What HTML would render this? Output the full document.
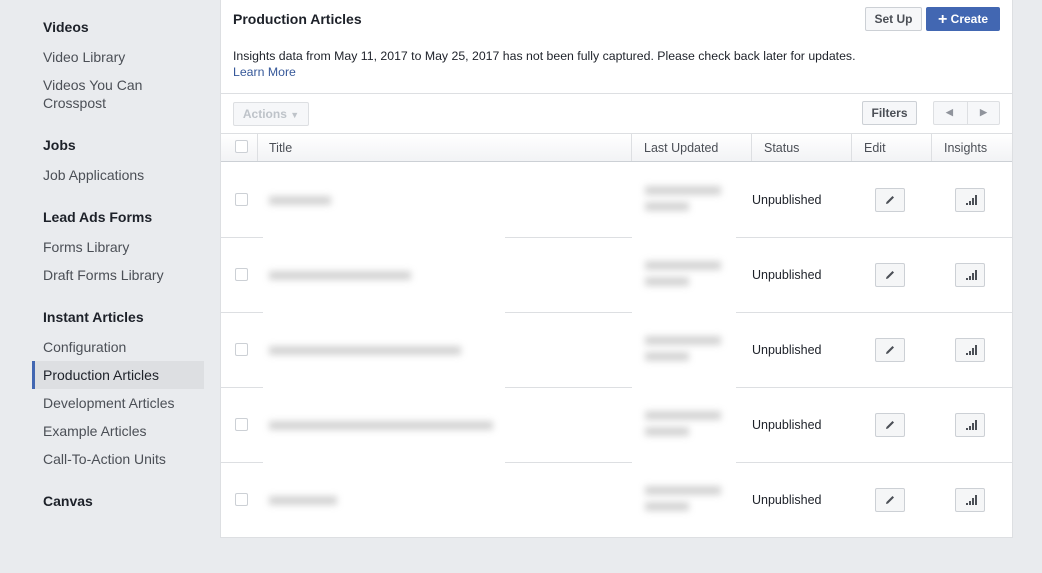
<!DOCTYPE html>
<html><head><style>
*{box-sizing:border-box;margin:0;padding:0}
body{width:1042px;height:573px;background:#e9ebee;font-family:"Liberation Sans",sans-serif;position:relative;overflow:hidden;color:#1d2129}
.a{position:absolute}
.sh{position:absolute;left:43px;font-size:14px;font-weight:bold;color:#1d2129}
.si{position:absolute;left:43px;font-size:14px;color:#4b4f56}
.panel{position:absolute;left:220px;top:-1px;width:793px;height:539px;background:#fff;border:1px solid #dddfe2}
.btn{position:absolute;border:1px solid #ccd0d5;background:#f6f7f9;border-radius:2px;font-size:12px;font-weight:bold;color:#4b4f56;text-align:center}
.hl{position:absolute;left:0;width:791px;height:1px;background:#dddfe2}
.th{position:absolute;top:141px;font-size:12.5px;color:#4b4f56}
.cb{position:absolute;left:14px;width:13px;height:13px;border:1px solid #ccd0d5;border-radius:2px;background:#fff}
.blur{position:absolute;background:#aaa;filter:blur(3.5px);opacity:.5;height:9px}
.st{position:absolute;left:531px;font-size:12.5px;color:#1d2129}
.ib{position:absolute;width:30px;height:24px;border:1px solid #ccd0d5;background:#f5f6f7;border-radius:2px}
.wb{position:absolute;background:#fff;height:4px}
</style></head><body>
<div class="sh" style="top:19px">Videos</div>
<div class="si" style="top:49px">Video Library</div>
<div class="si" style="top:77px">Videos You Can</div>
<div class="si" style="top:95px">Crosspost</div>
<div class="sh" style="top:137px">Jobs</div>
<div class="si" style="top:167px">Job Applications</div>
<div class="sh" style="top:209px">Lead Ads Forms</div>
<div class="si" style="top:239px">Forms Library</div>
<div class="si" style="top:267px">Draft Forms Library</div>
<div class="sh" style="top:309px">Instant Articles</div>
<div class="si" style="top:339px">Configuration</div>
<div class="a" style="left:32px;top:361px;width:172px;height:28px;background:#dddfe2;border-left:3px solid #4267b2"></div>
<div class="si" style="top:367px;color:#1d2129">Production Articles</div>
<div class="si" style="top:395px">Development Articles</div>
<div class="si" style="top:423px">Example Articles</div>
<div class="si" style="top:451px">Call-To-Action Units</div>
<div class="sh" style="top:493px">Canvas</div>

<div class="panel">
<div class="a" style="left:12px;top:11px;font-size:14px;font-weight:bold">Production Articles</div>
<div class="btn" style="left:644px;top:7px;width:57px;height:24px;line-height:22px">Set Up</div>
<div class="btn" style="left:705px;top:7px;width:74px;height:24px;line-height:22px;background:#4267b2;border-color:#4267b2;color:#fff"><span style="font-size:16px;vertical-align:-1px">+</span> Create</div>
<div class="a" style="left:12px;top:49px;font-size:12.3px">Insights data from May 11, 2017 to May 25, 2017 has not been fully captured. Please check back later for updates.</div>
<div class="a" style="left:12px;top:65px;font-size:12.3px;color:#365899">Learn More</div>
<div class="hl" style="top:93px"></div>
<div class="btn" style="left:12px;top:102px;width:76px;height:24px;line-height:22px;color:#bec3c9;border-color:#dddfe2">Actions <span style="font-size:9px">&#9660;</span></div>
<div class="btn" style="left:641px;top:101px;width:55px;height:24px;line-height:22px">Filters</div>
<div class="btn" style="left:712px;top:101px;width:67px;height:24px;border-color:#dddfe2"><div class="a" style="left:33px;top:0;width:1px;height:22px;background:#dddfe2"></div><span class="a" style="left:12px;top:5px;font-size:9px;color:#90949c">&#9664;</span><span class="a" style="left:46px;top:5px;font-size:9px;color:#90949c">&#9654;</span></div>
<div class="a" style="left:0;top:133px;width:791px;height:29px;background:linear-gradient(#fff,#f2f3f5);border-top:1px solid #dddfe2;border-bottom:1px solid #ccd0d5"></div>
<div class="cb" style="top:140px"></div>
<div class="a" style="left:36px;top:133px;width:1px;height:28px;background:#dddfe2"></div>
<div class="a" style="left:410px;top:133px;width:1px;height:28px;background:#dddfe2"></div>
<div class="a" style="left:530px;top:133px;width:1px;height:28px;background:#dddfe2"></div>
<div class="a" style="left:630px;top:133px;width:1px;height:28px;background:#dddfe2"></div>
<div class="a" style="left:710px;top:133px;width:1px;height:28px;background:#dddfe2"></div>
<div class="th" style="left:48px">Title</div>
<div class="th" style="left:423px">Last Updated</div>
<div class="th" style="left:543px">Status</div>
<div class="th" style="left:643px">Edit</div>
<div class="th" style="left:723px">Insights</div>

<div class="hl" style="top:237px"></div><div class="hl" style="top:312px"></div><div class="hl" style="top:387px"></div><div class="hl" style="top:462px"></div>
<div class="wb" style="left:42px;top:235px;width:242px"></div><div class="wb" style="left:411px;top:235px;width:104px"></div>
<div class="wb" style="left:42px;top:310px;width:242px"></div><div class="wb" style="left:411px;top:310px;width:104px"></div>
<div class="wb" style="left:42px;top:385px;width:242px"></div><div class="wb" style="left:411px;top:385px;width:104px"></div>
<div class="wb" style="left:42px;top:460px;width:242px"></div><div class="wb" style="left:411px;top:460px;width:104px"></div>

<div class="cb" style="top:193px"></div><div class="blur" style="left:48px;top:196px;width:62px"></div>
<div class="cb" style="top:268px"></div><div class="blur" style="left:48px;top:271px;width:142px"></div>
<div class="cb" style="top:343px"></div><div class="blur" style="left:48px;top:346px;width:192px"></div>
<div class="cb" style="top:418px"></div><div class="blur" style="left:48px;top:421px;width:224px"></div>
<div class="cb" style="top:493px"></div><div class="blur" style="left:48px;top:496px;width:68px"></div>

<div class="blur" style="left:424px;top:186px;width:76px"></div><div class="blur" style="left:424px;top:202px;width:44px"></div>
<div class="blur" style="left:424px;top:261px;width:76px"></div><div class="blur" style="left:424px;top:277px;width:44px"></div>
<div class="blur" style="left:424px;top:336px;width:76px"></div><div class="blur" style="left:424px;top:352px;width:44px"></div>
<div class="blur" style="left:424px;top:411px;width:76px"></div><div class="blur" style="left:424px;top:427px;width:44px"></div>
<div class="blur" style="left:424px;top:486px;width:76px"></div><div class="blur" style="left:424px;top:502px;width:44px"></div>

<div class="st" style="top:193px">Unpublished</div>
<div class="st" style="top:268px">Unpublished</div>
<div class="st" style="top:343px">Unpublished</div>
<div class="st" style="top:418px">Unpublished</div>
<div class="st" style="top:493px">Unpublished</div>

<div class="ib" style="left:654px;top:188px"><svg class="a" style="left:8px;top:5px" width="12" height="12" viewBox="0 0 12 12"><path d="M2 10 L2.5 8 L8.5 2 L10 3.5 L4 9.5 Z" fill="#4b4f56"/></svg></div>
<div class="ib" style="left:734px;top:188px"><svg class="a" style="left:8px;top:5px" width="14" height="12" viewBox="0 0 14 12"><path d="M2 9h2v2H2zM5 7h2v4H5zM8 4h2v7H8zM11 1h2v10h-2z" fill="#4b4f56"/></svg></div>
<div class="ib" style="left:654px;top:263px"><svg class="a" style="left:8px;top:5px" width="12" height="12" viewBox="0 0 12 12"><path d="M2 10 L2.5 8 L8.5 2 L10 3.5 L4 9.5 Z" fill="#4b4f56"/></svg></div>
<div class="ib" style="left:734px;top:263px"><svg class="a" style="left:8px;top:5px" width="14" height="12" viewBox="0 0 14 12"><path d="M2 9h2v2H2zM5 7h2v4H5zM8 4h2v7H8zM11 1h2v10h-2z" fill="#4b4f56"/></svg></div>
<div class="ib" style="left:654px;top:338px"><svg class="a" style="left:8px;top:5px" width="12" height="12" viewBox="0 0 12 12"><path d="M2 10 L2.5 8 L8.5 2 L10 3.5 L4 9.5 Z" fill="#4b4f56"/></svg></div>
<div class="ib" style="left:734px;top:338px"><svg class="a" style="left:8px;top:5px" width="14" height="12" viewBox="0 0 14 12"><path d="M2 9h2v2H2zM5 7h2v4H5zM8 4h2v7H8zM11 1h2v10h-2z" fill="#4b4f56"/></svg></div>
<div class="ib" style="left:654px;top:413px"><svg class="a" style="left:8px;top:5px" width="12" height="12" viewBox="0 0 12 12"><path d="M2 10 L2.5 8 L8.5 2 L10 3.5 L4 9.5 Z" fill="#4b4f56"/></svg></div>
<div class="ib" style="left:734px;top:413px"><svg class="a" style="left:8px;top:5px" width="14" height="12" viewBox="0 0 14 12"><path d="M2 9h2v2H2zM5 7h2v4H5zM8 4h2v7H8zM11 1h2v10h-2z" fill="#4b4f56"/></svg></div>
<div class="ib" style="left:654px;top:488px"><svg class="a" style="left:8px;top:5px" width="12" height="12" viewBox="0 0 12 12"><path d="M2 10 L2.5 8 L8.5 2 L10 3.5 L4 9.5 Z" fill="#4b4f56"/></svg></div>
<div class="ib" style="left:734px;top:488px"><svg class="a" style="left:8px;top:5px" width="14" height="12" viewBox="0 0 14 12"><path d="M2 9h2v2H2zM5 7h2v4H5zM8 4h2v7H8zM11 1h2v10h-2z" fill="#4b4f56"/></svg></div>
</div>
</body></html>
